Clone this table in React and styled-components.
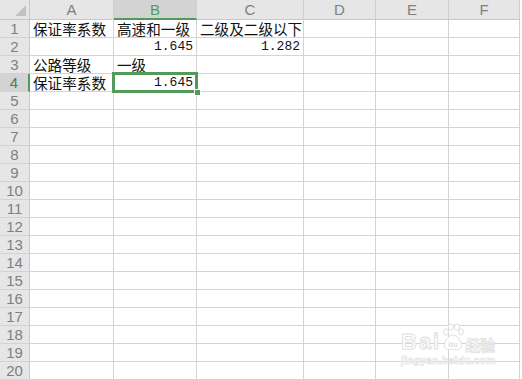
import React from "react";
import styled, { createGlobalStyle } from "styled-components";

const GlobalStyle = createGlobalStyle`
  html, body {
    margin: 0;
    padding: 0;
    background: #fff;
  }
  body {
    width: 522px;
    height: 379px;
    overflow: hidden;
  }
`;

const COLS = [
  { key: "A", width: 84 },
  { key: "B", width: 83 },
  { key: "C", width: 107 },
  { key: "D", width: 72 },
  { key: "E", width: 73 },
  { key: "F", width: 71 },
];

const ROW_COUNT = 20;
const ACTIVE_COL = "B";
const ACTIVE_ROW = 4;

const data = {
  A1: { text: "保证率系数" },
  B1: { text: "高速和一级" },
  C1: { text: "二级及二级以下" },
  B2: { text: "1.645", num: true },
  C2: { text: "1.282", num: true },
  A3: { text: "公路等级" },
  B3: { text: "一级" },
  A4: { text: "保证率系数" },
  B4: { text: "1.645", num: true },
};

const green = "#53995a";

const Sheet = styled.div`
  position: relative;
  display: grid;
  grid-template-columns: 30px ${COLS.map((c) => `${c.width}px`).join(" ")};
  grid-template-rows: 20px repeat(${ROW_COUNT}, 18px);
  width: 522px;
  height: 379px;
  overflow: hidden;
  font-family: "Noto Sans CJK SC", "Noto Sans", sans-serif;
`;

const Corner = styled.div`
  position: relative;
  background: #e6e6e6;
  border-right: 1px solid #c8c8c8;
  border-bottom: 1px solid #c8c8c8;
  box-sizing: border-box;

  &::after {
    content: "";
    position: absolute;
    right: 3px;
    bottom: 3px;
    width: 0;
    height: 0;
    border-left: 11px solid transparent;
    border-bottom: 11px solid #c2c2c2;
  }
`;

const ColHeader = styled.div`
  display: flex;
  align-items: center;
  justify-content: center;
  box-sizing: border-box;
  background: ${(p) => (p.$active ? "#d3d3d3" : "#e6e6e6")};
  border-right: 1px solid #cfcfcf;
  border-bottom: ${(p) => (p.$active ? `2px solid ${green}` : "1px solid #c8c8c8")};
  color: ${(p) => (p.$active ? green : "#808080")};
  font-family: "Liberation Sans", Arial, sans-serif;
  font-size: 15px;
  padding-top: ${(p) => (p.$active ? "1px" : "0")};
`;

const RowHeader = styled.div`
  display: flex;
  align-items: center;
  justify-content: center;
  box-sizing: border-box;
  background: ${(p) => (p.$active ? "#d3d3d3" : "#e6e6e6")};
  border-right: ${(p) => (p.$active ? `2px solid ${green}` : "1px solid #c8c8c8")};
  border-bottom: 1px solid #d2d2d2;
  color: ${(p) => (p.$active ? "#4f7f52" : "#808080")};
  font-family: "Liberation Sans", Arial, sans-serif;
  font-size: 15px;
  line-height: 16px;
`;

const Cell = styled.div`
  position: relative;
  display: flex;
  align-items: center;
  justify-content: ${(p) => (p.$num ? "flex-end" : "flex-start")};
  box-sizing: border-box;
  padding: 1px 3px 0 3px;
  border-right: 1px solid #d4d4d4;
  border-bottom: 1px solid #d4d4d4;
  color: #111;
  font-family: ${(p) =>
    p.$num ? `"Liberation Mono", "DejaVu Sans Mono", monospace` : `"Noto Sans CJK SC", sans-serif`};
  font-size: ${(p) => (p.$num ? "13px" : "14.6px")};
  line-height: 16px;
  white-space: nowrap;
  z-index: ${(p) => (p.$selected ? 2 : 1)};

  ${(p) =>
    p.$selected &&
    `
    &::before {
      content: "";
      position: absolute;
      left: -2px;
      top: -2px;
      right: -2px;
      bottom: -2px;
      border: 3px solid ${green};
      pointer-events: none;
    }
    &::after {
      content: "";
      position: absolute;
      right: -5px;
      bottom: -5px;
      width: 5px;
      height: 5px;
      background: ${green};
      border: 1px solid #fff;
    }
  `}
`;

const Watermark = styled.div`
  position: absolute;
  left: 401px;
  top: 323px;
  display: flex;
  flex-direction: column;
  align-items: flex-start;
  pointer-events: none;
  z-index: 5;
  color: rgba(255, 255, 255, 0.9);
`;

const MarkLine = styled.div`
  display: flex;
  align-items: flex-end;
  gap: 1px;
`;

const MarkWord = styled.span`
  font-family: "Liberation Sans", Arial, sans-serif;
  font-size: ${(p) => p.$size || 20}px;
  font-weight: 700;
  line-height: 0.8;
  -webkit-text-stroke: 1px #e0e0e0;
  letter-spacing: ${(p) => p.$spacing || 0}px;
  margin-bottom: 1px;
`;

const MarkCn = styled.span`
  font-family: "Noto Sans CJK SC", sans-serif;
  font-size: 15px;
  font-weight: 700;
  line-height: 1;
  -webkit-text-stroke: 0.8px #e0e0e0;
`;

const MarkSub = styled.span`
  font-family: "Liberation Sans", Arial, sans-serif;
  font-size: 10px;
  font-weight: 700;
  margin-top: 3px;
  color: rgba(255, 255, 255, 0.85);
  -webkit-text-stroke: 0.6px #e0e0e0;
  letter-spacing: 0.4px;
`;

const Paw = () => (
  <svg width="22" height="29" viewBox="0 0 22 29">
    <g fill="rgba(255,255,255,0.9)" stroke="#e0e0e0" strokeWidth="1">
      <ellipse cx="4" cy="9" rx="2.6" ry="3.2" />
      <ellipse cx="9" cy="4" rx="2.6" ry="3.2" />
      <ellipse cx="15" cy="4" rx="2.6" ry="3.2" />
      <ellipse cx="19" cy="9" rx="2.4" ry="3" />
      <path d="M11 12 C6 12 2 19 2.5 23 C3 27 7 27 11 26 C15 27 19 27 19.5 23 C20 19 16 12 11 12 Z" />
    </g>
    <text
      x="11"
      y="24"
      textAnchor="middle"
      fontFamily="Liberation Sans, Arial, sans-serif"
      fontSize="8"
      fontWeight="700"
      fill="#e0e0e0"
    >
      du
    </text>
  </svg>
);

export default function App() {
  const rows = Array.from({ length: ROW_COUNT }, (_, i) => i + 1);

  return (
    <>
      <GlobalStyle />
      <Sheet>
        <Corner />
        {COLS.map((c) => (
          <ColHeader key={c.key} $active={c.key === ACTIVE_COL}>
            {c.key}
          </ColHeader>
        ))}
        {rows.map((r) => (
          <React.Fragment key={r}>
            <RowHeader $active={r === ACTIVE_ROW}>{r}</RowHeader>
            {COLS.map((c) => {
              const id = `${c.key}${r}`;
              const cell = data[id];
              return (
                <Cell
                  key={id}
                  $num={cell?.num}
                  $selected={c.key === ACTIVE_COL && r === ACTIVE_ROW}
                >
                  {cell?.text}
                </Cell>
              );
            })}
          </React.Fragment>
        ))}

        <Watermark>
          <MarkLine>
            <MarkWord $size={22} $spacing={2}>Bai</MarkWord>
            <Paw />
            <MarkCn>经验</MarkCn>
          </MarkLine>
          <MarkSub>jingyan.baidu.com</MarkSub>
        </Watermark>
      </Sheet>
    </>
  );
}
